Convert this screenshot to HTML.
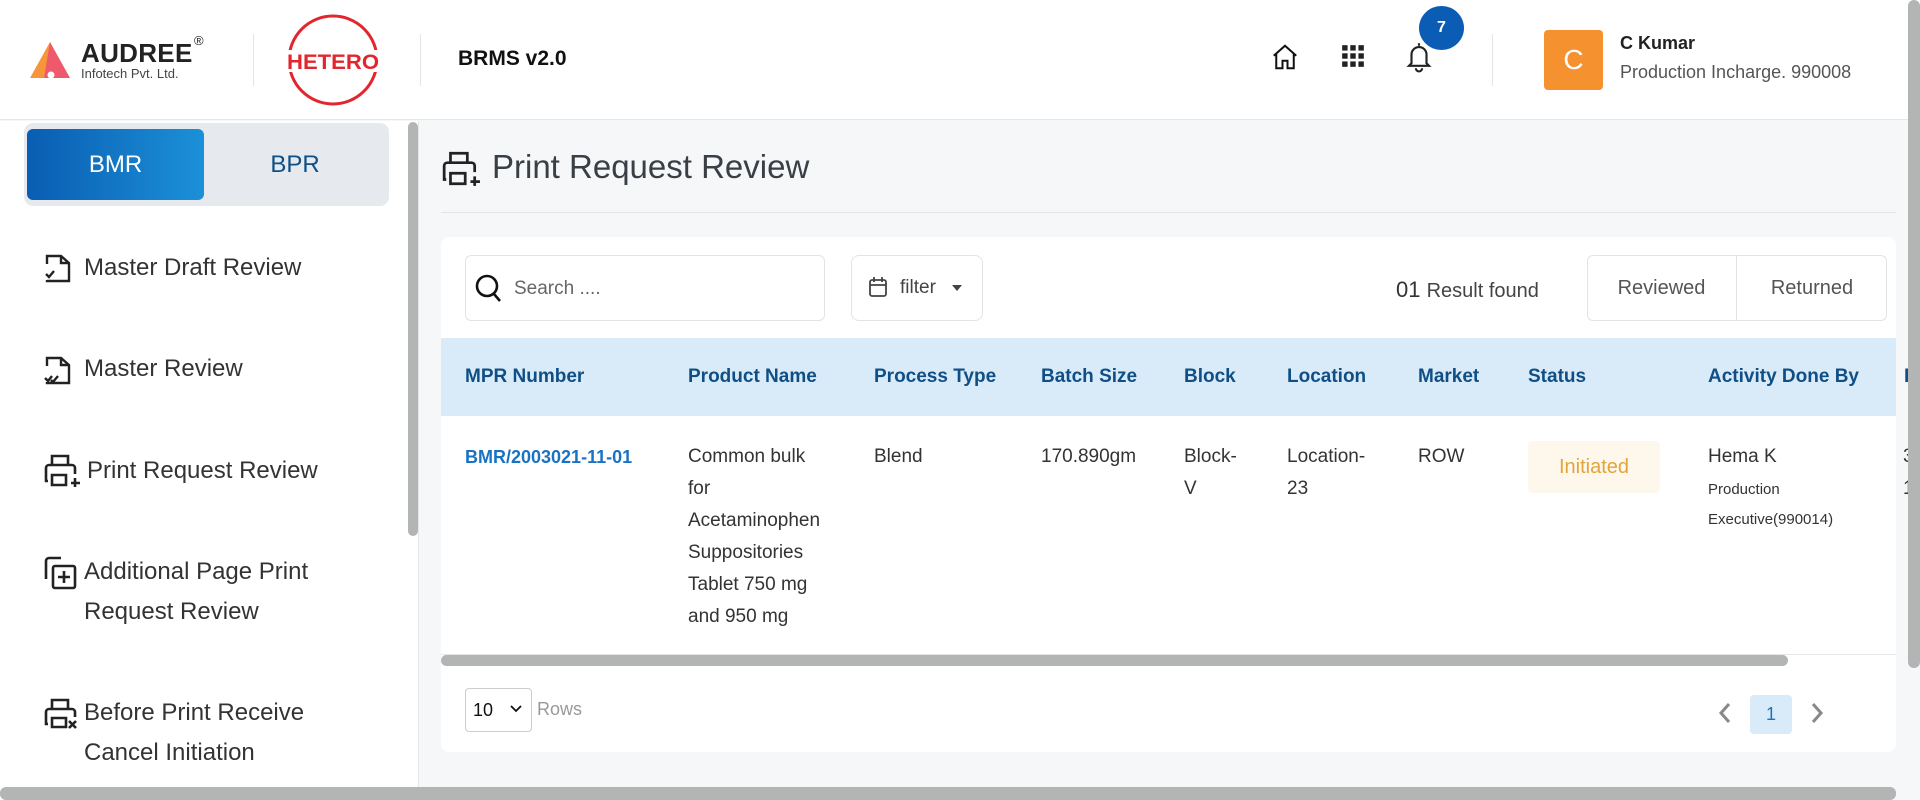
<!DOCTYPE html>
<html><head><meta charset="utf-8"><style>
*{margin:0;padding:0;box-sizing:border-box}
body{width:1920px;height:800px;overflow:hidden;background:#f6f7f9;font-family:"Liberation Sans",sans-serif;position:relative;color:#222}
.a{position:absolute}
.hdr{left:0;top:0;width:1920px;height:120px;background:#fff;border-bottom:1px solid #e3e6ea}
.vd{width:1px;background:#e4e4e4}
.side{left:0;top:121px;width:419px;height:679px;background:#fff;border-right:1px solid #e6e6e6}
.mi{font-size:24px;color:#333;left:84px;line-height:40px}
.th{font-size:19px;font-weight:bold;color:#0f4f86;top:366px}
.td{font-size:19px;color:#333;line-height:32px;top:441px}
</style></head><body>
<div class="a hdr"></div>
<svg class="a" style="left:30px;top:42px" width="44" height="38" viewBox="0 0 44 38"><polygon points="20,0 0,36 14,36 26,12" fill="#f7953b"/><polygon points="20,0 40,36 14,36" fill="#ee5a6b"/><circle cx="21" cy="33" r="3.5" fill="#fff"/></svg>
<div class="a" style="left:81px;top:38px;font-size:26px;font-weight:bold;color:#222;letter-spacing:0.3px">AUDREE</div>
<div class="a" style="left:194px;top:33px;font-size:13px;color:#222">®</div>
<div class="a" style="left:81px;top:66px;font-size:13px;color:#444">Infotech Pvt. Ltd.</div>
<div class="a vd" style="left:253px;top:34px;height:52px"></div>
<svg class="a" style="left:283px;top:12px" width="100" height="96" viewBox="0 0 100 96"><circle cx="50" cy="48" r="44" fill="none" stroke="#e3262d" stroke-width="3"/><rect x="2" y="38" width="96" height="22" fill="#fff"/><text x="50" y="57" text-anchor="middle" font-family="Liberation Sans" font-weight="bold" font-size="21" textLength="92" lengthAdjust="spacingAndGlyphs" fill="#e3262d">HETERO</text></svg>
<div class="a vd" style="left:420px;top:34px;height:52px"></div>
<div class="a" style="left:458px;top:47px;font-size:21px;font-weight:bold;color:#111">BRMS v2.0</div>
<svg class="a" style="left:1270px;top:42px" width="30" height="30" viewBox="0 0 24 24" fill="none" stroke="#111" stroke-width="1.6"><path d="M3 11 12 3l9 8M5 9.5V21h5v-6h4v6h5V9.5"/></svg>
<svg class="a" style="left:1340px;top:43px" width="26" height="26" viewBox="0 0 24 24" fill="#222"><rect x="2" y="2" width="5" height="5"/><rect x="9.5" y="2" width="5" height="5"/><rect x="17" y="2" width="5" height="5"/><rect x="2" y="9.5" width="5" height="5"/><rect x="9.5" y="9.5" width="5" height="5"/><rect x="17" y="9.5" width="5" height="5"/><rect x="2" y="17" width="5" height="5"/><rect x="9.5" y="17" width="5" height="5"/><rect x="17" y="17" width="5" height="5"/></svg>
<svg class="a" style="left:1404px;top:40px" width="30" height="34" viewBox="0 0 24 26" fill="none" stroke="#222" stroke-width="1.7"><path d="M12 2v2M6 18V11a6 6 0 0 1 12 0v7l2 2H4z"/><path d="M9.5 22a2.5 2.5 0 0 0 5 0"/></svg>
<div class="a" style="left:1419px;top:6px;width:45px;height:44px;border-radius:50%;background:#0b5cb5;color:#fff;font-weight:bold;font-size:16px;text-align:center;line-height:44px">7</div>
<div class="a vd" style="left:1492px;top:34px;height:52px"></div>
<div class="a" style="left:1544px;top:30px;width:59px;height:60px;border-radius:4px;background:#f5922f;color:#fff;font-size:28px;text-align:center;line-height:60px">C</div>
<div class="a" style="left:1620px;top:33px;font-size:18px;font-weight:bold;color:#222">C Kumar</div>
<div class="a" style="left:1620px;top:62px;font-size:18px;color:#555">Production Incharge. 990008</div>
<div class="a side"></div>
<div class="a" style="left:24px;top:123px;width:365px;height:83px;border-radius:9px;background:#e6e9ee"></div>
<div class="a" style="left:27px;top:129px;width:177px;height:71px;border-radius:6px;background:linear-gradient(90deg,#0a5db2,#1b90d8);color:#fff;font-size:24px;text-align:center;line-height:71px">BMR</div>
<div class="a" style="left:204px;top:129px;width:182px;height:71px;color:#0e4f86;font-size:24px;text-align:center;line-height:71px">BPR</div>
<svg class="a" style="left:43px;top:252px" width="30" height="32" viewBox="0 0 30 32" fill="none" stroke="#222" stroke-width="2.4"><path d="M4 12V4h14l8 7v18H4v-1M18 4v7h8"/><path d="M3 22l3 3 5-6"/></svg>
<div class="a mi" style="top:248px">Master Draft Review</div>
<svg class="a" style="left:43px;top:354px" width="30" height="32" viewBox="0 0 30 32" fill="none" stroke="#222" stroke-width="2.4"><path d="M4 12V4h14l8 7v18H4v-1M18 4v7h8"/><path d="M2 24l3 3 4-5M8 26l2 2 5-6"/></svg>
<div class="a mi" style="top:349px">Master Review</div>
<svg class="a" style="left:43px;top:453px" width="38" height="36" viewBox="0 0 38 36" fill="none" stroke="#222" stroke-width="2.6"><path d="M9 12V3h16v9M5 28H3V15a3 3 0 0 1 3-3h23a3 3 0 0 1 3 3v6M9 22h14v10H9z"/><path d="M32 25v9M28 30h9"/></svg>
<div class="a mi" style="top:451px;left:87px">Print Request Review</div>
<svg class="a" style="left:43px;top:556px" width="34" height="34" viewBox="0 0 34 34" fill="none" stroke="#222" stroke-width="2.6"><path d="M3 23V5a3 3 0 0 1 3-3h12"/><rect x="10" y="10" width="22" height="22" rx="2"/><path d="M21 15v12M15 21h12"/></svg>
<div class="a mi" style="top:552px">Additional Page Print<br>Request Review</div>
<svg class="a" style="left:43px;top:697px" width="36" height="34" viewBox="0 0 36 34" fill="none" stroke="#222" stroke-width="2.6"><path d="M9 12V3h16v9M5 27H3V15a3 3 0 0 1 3-3h23a3 3 0 0 1 3 3v5M9 21h14v9H9z"/><path d="M26 24l7 7M33 24l-7 7"/></svg>
<div class="a mi" style="top:693px">Before Print Receive<br>Cancel Initiation</div>
<div class="a" style="left:408px;top:122px;width:10px;height:414px;border-radius:5px;background:#b3b4b4"></div>
<svg class="a" style="left:441px;top:150px" width="40" height="38" viewBox="0 0 38 36" fill="none" stroke="#222" stroke-width="2.6"><path d="M9 12V3h16v9M5 28H3V15a3 3 0 0 1 3-3h23a3 3 0 0 1 3 3v6M9 22h14v10H9z"/><path d="M32 25v9M28 30h9"/></svg>
<div class="a" style="left:492px;top:148px;font-size:33px;color:#3a3f45">Print Request Review</div>
<div class="a" style="left:441px;top:212px;width:1455px;height:1px;background:#e1e4e8"></div>
<div class="a" style="left:441px;top:237px;width:1455px;height:515px;background:#fff;border-radius:8px"></div>
<div class="a" style="left:465px;top:255px;width:360px;height:66px;border:1px solid #e1e3e6;border-radius:6px"></div>
<svg class="a" style="left:474px;top:273px" width="30" height="32" viewBox="0 0 30 32" fill="none" stroke="#111" stroke-width="2.6"><circle cx="13" cy="13" r="10"/><path d="M20 21l6 7"/></svg>
<div class="a" style="left:514px;top:278px;font-size:19px;color:#666">Search ....</div>
<div class="a" style="left:851px;top:255px;width:132px;height:66px;border:1px solid #e1e3e6;border-radius:8px"></div>
<svg class="a" style="left:868px;top:276px" width="20" height="22" viewBox="0 0 20 22" fill="none" stroke="#444" stroke-width="1.8"><rect x="2" y="4" width="16" height="16" rx="2"/><path d="M2 9h16M6 1v5M14 1v5"/></svg>
<div class="a" style="left:900px;top:277px;font-size:19px;color:#444">filter</div>
<div class="a" style="left:952px;top:285px;border:5px solid transparent;border-top:6px solid #444"></div>
<div class="a" style="left:1396px;top:277px;font-size:22px;color:#333">01 <span style="font-size:20px;color:#444">Result found</span></div>
<div class="a" style="left:1587px;top:255px;width:300px;height:66px;border:1px solid #e1e3e6;border-radius:6px"></div>
<div class="a" style="left:1736px;top:256px;width:1px;height:64px;background:#e1e3e6"></div>
<div class="a" style="left:1587px;top:277px;width:149px;text-align:center;font-size:20px;color:#555">Reviewed</div>
<div class="a" style="left:1737px;top:277px;width:150px;text-align:center;font-size:20px;color:#555">Returned</div>
<div class="a" style="left:441px;top:338px;width:1455px;height:78px;background:#d9ebf8"></div>
<div class="a th" style="left:465px">MPR Number</div>
<div class="a th" style="left:688px">Product Name</div>
<div class="a th" style="left:874px">Process Type</div>
<div class="a th" style="left:1041px">Batch Size</div>
<div class="a th" style="left:1184px">Block</div>
<div class="a th" style="left:1287px">Location</div>
<div class="a th" style="left:1418px">Market</div>
<div class="a th" style="left:1528px">Status</div>
<div class="a th" style="left:1708px">Activity Done By</div>
<div class="a th" style="left:1904px">D</div>
<div class="a td" style="left:465px;color:#1a73c2;font-weight:bold;font-size:18px">BMR/2003021-11-01</div>
<div class="a td" style="left:688px">Common bulk<br>for<br>Acetaminophen<br>Suppositories<br>Tablet 750 mg<br>and 950 mg</div>
<div class="a td" style="left:874px">Blend</div>
<div class="a td" style="left:1041px">170.890gm</div>
<div class="a td" style="left:1184px">Block-<br>V</div>
<div class="a td" style="left:1287px">Location-<br>23</div>
<div class="a td" style="left:1418px">ROW</div>
<div class="a" style="left:1528px;top:441px;width:132px;height:52px;background:#fdf7ec;border-radius:4px;color:#e3a43a;font-size:20px;text-align:center;line-height:52px">Initiated</div>
<div class="a td" style="left:1708px">Hema K</div>
<div class="a" style="left:1708px;top:475px;font-size:15px;color:#333;line-height:30px">Production<br>Executive(990014)</div>
<div class="a td" style="left:1903px">3<br>1</div>
<div class="a" style="left:441px;top:654px;width:1455px;height:1px;background:#e4e6e9"></div>
<div class="a" style="left:441px;top:655px;width:1347px;height:11px;border-radius:6px;background:#b3b4b4"></div>
<div class="a" style="left:465px;top:688px;width:67px;height:44px;border:1px solid #ccc;border-radius:4px;font-size:18px;line-height:42px;padding-left:7px;color:#111;background:#fff">10</div>
<svg class="a" style="left:510px;top:705px" width="12" height="8" viewBox="0 0 12 8" fill="none" stroke="#111" stroke-width="1.8"><path d="M1 1l5 5 5-5"/></svg>
<div class="a" style="left:537px;top:699px;font-size:18px;color:#999">Rows</div>
<svg class="a" style="left:1718px;top:702px" width="14" height="22" viewBox="0 0 14 22" fill="none" stroke="#888" stroke-width="3"><path d="M11 2 3 11l8 9"/></svg>
<div class="a" style="left:1750px;top:695px;width:42px;height:39px;background:#d9ebf8;border-radius:4px;color:#1a73c2;font-size:18px;text-align:center;line-height:39px">1</div>
<svg class="a" style="left:1810px;top:702px" width="14" height="22" viewBox="0 0 14 22" fill="none" stroke="#888" stroke-width="3"><path d="M3 2l8 9-8 9"/></svg>
<div class="a" style="left:1908px;top:0;width:12px;height:668px;border-radius:6px;background:#b3b4b4"></div>
<div class="a" style="left:0;top:787px;width:1896px;height:13px;border-radius:6px;background:#b3b4b4"></div>
</body></html>
